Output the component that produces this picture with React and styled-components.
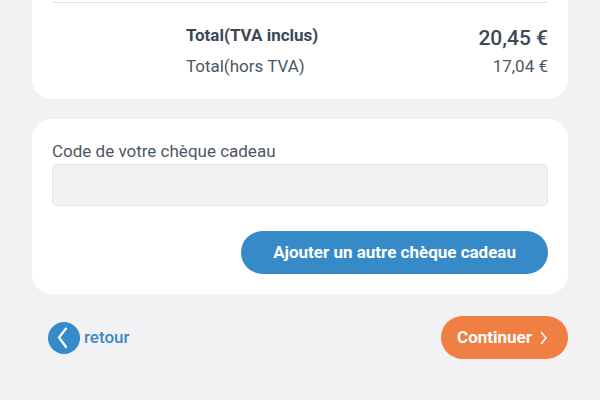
import styled, { createGlobalStyle } from "styled-components";
import { useState } from "react";

const GlobalStyle = createGlobalStyle`
  * {
    box-sizing: border-box;
  }

  body {
    margin: 0;
    background-color: #f2f2f4;
    color: #46525f;
    font-family: Roboto, "Liberation Sans", sans-serif;
    font-size: 17px;
    line-height: 25px;
  }
`;

const Page = styled.main`
  display: flex;
  flex-direction: column;
  padding: 0 32px 40px;
`;

const Card = styled.section`
  padding: 20px;
  border-radius: 20px;
  background-color: #ffffff;
`;

const SummaryCard = styled(Card)`
  padding-top: 2px;
  border-top-left-radius: 0;
  border-top-right-radius: 0;
`;

const Totals = styled.dl`
  display: flex;
  flex-direction: column;
  gap: 1px;
  margin: 0;
  padding-top: 20px;
  border-top: 1px solid #dfe1e4;
`;

const TotalRow = styled.div`
  display: flex;
  justify-content: space-between;
  align-items: start;
  padding-left: 27%;
  color: ${({ $main }) => ($main ? "#3c4855" : "#4b5764")};
`;

const TotalName = styled.dt`
  font-weight: ${({ $main }) => ($main ? 700 : 400)};
`;

const Amount = styled.dd`
  margin: 0;
  font-weight: ${({ $main }) => ($main ? 500 : 400)};
  font-size: ${({ $main }) => ($main ? "21px" : "17px")};
  line-height: ${({ $main }) => ($main ? "30px" : "25px")};
`;

const GiftForm = styled(Card)`
  display: flex;
  flex-direction: column;
  margin-top: 20px;
`;

const Label = styled.label`
  color: #4b5764;
`;

const CodeInput = styled.input`
  width: 100%;
  height: 42px;
  padding: 0 12px;
  border: 1px solid #e3e6e9;
  border-radius: 5px;
  background-color: #f2f2f4;
  color: inherit;
  font: inherit;
`;

const Button = styled.button`
  display: flex;
  justify-content: center;
  align-items: center;
  gap: 8px;
  height: 43px;
  padding: 0 ${({ $wide }) => ($wide ? "32px" : "16px")};
  border: none;
  border-radius: 22px;
  background-color: ${({ $color }) => $color};
  color: #ffffff;
  font: inherit;
  font-weight: 700;
  cursor: pointer;

  &:hover {
    opacity: 0.9;
  }
`;

const AddButton = styled(Button)`
  align-self: flex-end;
  margin-top: 25px;
`;

const Actions = styled.nav`
  display: flex;
  justify-content: space-between;
  align-items: center;
  margin-top: 22px;
  padding-left: 16px;
`;

const BackLink = styled.a`
  display: flex;
  align-items: center;
  gap: 4px;
  color: #368ac7;
  font-weight: 500;
  text-decoration: none;
`;

const Circle = styled.span`
  display: flex;
  justify-content: center;
  align-items: center;
  width: 32px;
  height: 32px;
  border-radius: 50%;
  background-color: #368ac7;
`;

function App() {
  const [code, setCode] = useState("");

  return (
    <>
      <GlobalStyle />
      <Page>
        <SummaryCard>
          <Totals>
            <TotalRow $main>
              <TotalName $main>Total(TVA inclus)</TotalName>
              <Amount $main>20,45 €</Amount>
            </TotalRow>
            <TotalRow>
              <TotalName>Total(hors TVA)</TotalName>
              <Amount>17,04 €</Amount>
            </TotalRow>
          </Totals>
        </SummaryCard>

        <GiftForm as="form" onSubmit={(e) => e.preventDefault()}>
          <Label htmlFor="gift-code">Code de votre chèque cadeau</Label>
          <CodeInput
            id="gift-code"
            type="text"
            value={code}
            onChange={(e) => setCode(e.target.value)}
          />
          <AddButton type="submit" $color="#368ac7" $wide>
            Ajouter un autre chèque cadeau
          </AddButton>
        </GiftForm>

        <Actions>
          <BackLink href="#retour">
            <Circle>
              <svg width="32" height="32" viewBox="0 0 32 32" fill="none">
                <path
                  d="M18 6.5L11 15.5L18 25"
                  stroke="#ffffff"
                  strokeWidth="2.2"
                  strokeLinecap="round"
                />
              </svg>
            </Circle>
            retour
          </BackLink>
          <Button type="button" $color="#ef7f43">
            Continuer
            <svg width="12" height="14" viewBox="0 0 12 14" fill="none">
              <path
                d="M1.5 1.5L6 7L1.5 12.5"
                stroke="#ffffff"
                strokeWidth="1.5"
                strokeLinecap="round"
              />
            </svg>
          </Button>
        </Actions>
      </Page>
    </>
  );
}

export default App;
